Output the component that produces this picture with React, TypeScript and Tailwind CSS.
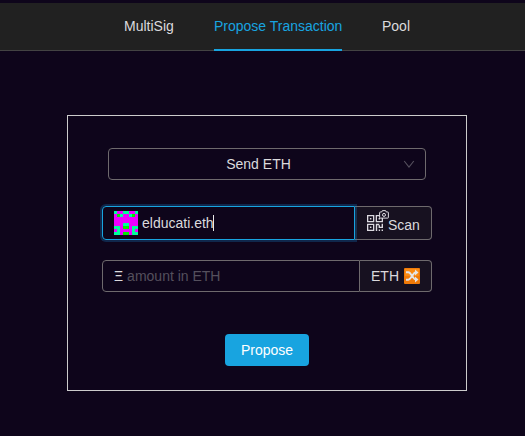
import React from 'react';

const AVATAR = [
  'tmmttmmt',
  'mltmmtlm',
  'mmmmmmmm',
  'mmmmmmmm',
  'mmmttmmm',
  'ttmllmtt',
  'mtmmmmtm',
  'ttmllmtt',
];

const AVATAR_COLORS: Record<string, string> = { t: '#00ff9c', m: '#ec00ff', l: '#00ec00' };

function Avatar() {
  return (
    <svg width="24" height="24" viewBox="0 0 8 8" shapeRendering="crispEdges" className="shrink-0">
      {AVATAR.flatMap((row, y) =>
        row.split('').map((c, x) => (
          <rect key={`${x}-${y}`} x={x} y={y} width="1" height="1" fill={AVATAR_COLORS[c]} />
        )),
      )}
    </svg>
  );
}

function QrIcon() {
  return (
    <svg width="16" height="16" viewBox="0 0 16 16" fill="none" stroke="#dcdae0" className="shrink-0">
      <path d="M.65.65h6v6h-6zM9.35.65h6v6h-6zM.65 9.35h6v6h-6z" strokeWidth="1.3" />
      <path
        d="M2.9 2.9h1.5v1.5H2.9zM11.6 2.9h1.5v1.5h-1.5zM2.9 11.6h1.5v1.5H2.9zM8.8 8.8h1.4V16H8.8zM10.2 8.8h2.1v1.4h-2.1zM11.6 10.2H13v2.9h-1.4zM13 11.7h1.6v1.4H13zM14.6 8.8H16v4.3h-1.4zM11.7 14.6h1.4V16h-1.4zM14.6 14.6H16V16h-1.4z"
        fill="#dcdae0"
        stroke="none"
      />
    </svg>
  );
}

function CameraIcon() {
  return (
    <svg width="10" height="9" viewBox="0 0 10 9" fill="none" stroke="#dcdae0" className="absolute left-3 -top-[5px]">
      <path d="M1.2 2h1.5L3.4.6h3.2L7.3 2h1.5q.6 0 .6.6v4.9q0 .6-.6.6H1.2q-.6 0-.6-.6V2.6q0-.6.6-.6z" fill="#1a1424" />
      <circle cx="5" cy="4.9" r="1.5" />
    </svg>
  );
}

function ShuffleIcon() {
  return (
    <svg width="16" height="16" viewBox="0 0 16 16" fill="none" className="ml-[5px] shrink-0">
      <rect width="16" height="16" rx="1" fill="#f07a08" />
      <path d="M1 1h14v7H1z" fill="#fa8b14" />
      <path d="M2 4.2h2.2q1 0 1.8 1l4 5.3q.8 1 1.8 1h.7M2 11.7h2.2q1 0 1.8-1l4-5.3q.8-1 1.8-1h.7" stroke="#e4e4e6" strokeWidth="1.9" />
      <path d="M11 1.4l3.5 3-3.5 3zM11 8.6l3.5 3-3.5 3z" fill="#e4e4e6" />
    </svg>
  );
}

export default function App() {
  return (
    <div className="h-[436px] w-[525px] bg-[#0e051b] pt-[3px] font-['Liberation_Sans',Arial,sans-serif] text-[14px] leading-[22px] text-[#dbdadd]">
      <nav className="flex h-12 gap-10 border-b border-[#434343] bg-[#212121] pl-[124px] leading-[46px]">
        <a className="h-12 w-[50px]">MultiSig</a>
        <a className="h-12 w-32 whitespace-nowrap border-b-2 border-[#18a4e0] text-[#18a4e0]">Propose Transaction</a>
        <a className="h-12">Pool</a>
      </nav>

      <main className="ml-[67px] mt-16 h-[276px] w-[400px] border border-[#cccccc] pl-[34px] pt-8">
        <div className="ml-1.5 flex h-8 w-[318px] items-center rounded border border-[#6e6a6d] pl-[11px] pr-2.5">
          <span className="flex-1 pr-1.5 text-center">Send ETH</span>
          <svg width="12" height="12" viewBox="0 0 12 12" fill="none" stroke="#55505d" strokeWidth="1.1">
            <path d="M1.2 3l4.8 6 4.8-6" />
          </svg>
        </div>

        <div className="mt-[26px] flex h-[34px] w-[330px]">
          <div className="z-10 flex w-[253px] items-center rounded-l border border-[#18a4e0] pl-[11px] shadow-[0_0_0_2px_rgba(24,144,220,0.25)]">
            <Avatar />
            <span className="ml-1">elducati.eth</span>
            <span className="-ml-px h-4 w-px bg-[#e8e8e8]" />
          </div>
          <div className="flex flex-1 rounded-r border border-l-0 border-[#6e6a6d] bg-[#171120] pl-3">
            <span className="relative mt-2 h-4 w-4">
              <QrIcon />
              <CameraIcon />
            </span>
            <span className="ml-[5px] mt-[7px]">Scan</span>
          </div>
        </div>

        <div className="mt-5 flex h-8 w-[330px]">
          <div className="flex w-[258px] items-center rounded-l border border-[#6e6a6d] pl-[11px]">
            <span>Ξ</span>
            <span className="ml-1 text-[#55505d]">amount in ETH</span>
          </div>
          <div className="flex flex-1 items-center rounded-r border border-l-0 border-[#6e6a6d] bg-[#171120] pl-[11px]">
            ETH
            <ShuffleIcon />
          </div>
        </div>

        <button className="ml-[123px] mt-[42px] block h-8 w-[84px] rounded bg-[#18a4e0] text-white">Propose</button>
      </main>
    </div>
  );
}
